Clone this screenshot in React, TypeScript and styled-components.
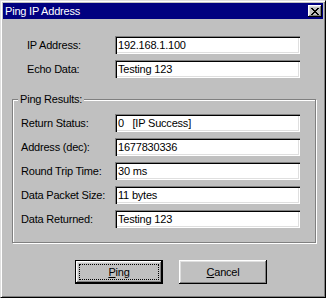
import { Fragment } from "react";
import styled, { createGlobalStyle } from "styled-components";

const GlobalStyle = createGlobalStyle`
	html, body {
		margin: 0;
		padding: 0;
		background: #c0c0c0;
	}
	body {
		font-family: "Liberation Sans", Arial, sans-serif;
		font-size: 11px;
		color: #000;
	}
`;

const Window = styled.div`
	box-sizing: border-box;
	width: 326px;
	height: 298px;
	background: #c0c0c0;
	border: 1px solid;
	border-color: #dfdfdf #000 #000 #dfdfdf;
	box-shadow: inset 1px 1px #fff, inset -1px -1px #808080;
	padding: 2px;
	display: flex;
	flex-direction: column;
`;

const TitleBar = styled.div`
	height: 16px;
	background: #000080;
	color: #fff;
	display: flex;
	align-items: center;
	justify-content: space-between;
	padding: 0 1px 0 2px;
`;

const TitleText = styled.span`
	font-size: 11px;
	line-height: 13px;
	letter-spacing: -0.2px;
`;

const CloseButton = styled.div`
	width: 14px;
	height: 12px;
	background: #c0c0c0;
	box-shadow: inset -1px -1px #000, inset 1px 1px #fff, inset -2px -2px #808080,
		inset 2px 2px #dfdfdf;
	display: flex;
	align-items: center;
	justify-content: center;
`;

const Fields = styled.div<{ $label: number }>`
	display: grid;
	grid-template-columns: ${(p) => p.$label}px 185px;
	row-gap: 6px;
	align-items: center;
`;

const TopSection = styled.div`
	margin-top: 17px;
	padding-left: 24px;
`;

const Label = styled.span`
	font-size: 11px;
	letter-spacing: -0.2px;
	line-height: 13px;
`;

const TextBox = styled.div`
	box-sizing: border-box;
	height: 18px;
	background: #fff;
	box-shadow: inset 1px 1px #808080, inset 2px 2px #000, inset -1px -1px #fff,
		inset -2px -2px #dfdfdf;
	padding: 0 2px 0 3px;
	display: flex;
	align-items: center;
	font-size: 11px;
	letter-spacing: -0.2px;
	white-space: pre;
`;

const Group = styled.div`
	position: relative;
	box-sizing: border-box;
	margin: 21px 0 0 9px;
	width: 304px;
	border: 1px solid #808080;
	box-shadow: inset 1px 1px #fff, 1px 1px #fff;
	padding: 14px 0 14px 8px;
`;

const Legend = styled.span`
	position: absolute;
	top: -7px;
	left: 5px;
	padding: 0 2px;
	background: #c0c0c0;
	font-size: 11px;
	line-height: 13px;
	letter-spacing: -0.2px;
`;

const ButtonRow = styled.div`
	display: flex;
	gap: 16px;
	margin-top: 17px;
	padding-left: 72px;
`;

const Button = styled.button<{ $default?: boolean }>`
	box-sizing: border-box;
	width: 88px;
	height: 24px;
	margin: 0;
	padding: ${(p) => (p.$default ? "2px" : "3px")};
	background: #c0c0c0;
	border: ${(p) => (p.$default ? "1px solid #000" : "none")};
	box-shadow: inset -1px -1px #000, inset 1px 1px #fff, inset -2px -2px #808080,
		inset 2px 2px #dfdfdf;
	font-family: "Liberation Sans", Arial, sans-serif;
	font-size: 11px;
	letter-spacing: -0.2px;
	color: #000;
	display: flex;
`;

const ButtonFace = styled.span<{ $focus?: boolean }>`
	flex: 1;
	display: flex;
	align-items: center;
	justify-content: center;
	margin: 1px;
	border: 1px dotted ${(p) => (p.$focus ? "#000" : "transparent")};
`;

const topRows = [
	["IP Address:", "192.168.1.100"],
	["Echo Data:", "Testing 123"],
];

const resultRows = [
	["Return Status:", "0   [IP Success]"],
	["Address (dec):", "1677830336"],
	["Round Trip Time:", "30 ms"],
	["Data Packet Size:", "11 bytes"],
	["Data Returned:", "Testing 123"],
];

function CloseGlyph() {
	return (
		<svg width="8" height="7" viewBox="0 0 8 7" shapeRendering="crispEdges">
			<path
				d="M0 0h2v1H0zM6 0h2v1H6zM1 1h2v1H1zM5 1h2v1H5zM2 2h4v1H2zM3 3h2v1H3zM2 4h4v1H2zM1 5h2v1H1zM5 5h2v1H5zM0 6h2v1H0zM6 6h2v1H6z"
				fill="#000"
			/>
		</svg>
	);
}

function FieldRows({ rows }: { rows: string[][] }) {
	return (
		<>
			{rows.map(([label, value]) => (
				<Fragment key={label}>
					<Label>{label}</Label>
					<TextBox>{value}</TextBox>
				</Fragment>
			))}
		</>
	);
}

export default function App() {
	return (
		<>
			<GlobalStyle />
			<Window>
				<TitleBar>
					<TitleText>Ping IP Address</TitleText>
					<CloseButton>
						<CloseGlyph />
					</CloseButton>
				</TitleBar>
				<TopSection>
					<Fields $label={88}>
						<FieldRows rows={topRows} />
					</Fields>
				</TopSection>
				<Group>
					<Legend>Ping Results:</Legend>
					<Fields $label={94}>
						<FieldRows rows={resultRows} />
					</Fields>
				</Group>
				<ButtonRow>
					<Button $default>
						<ButtonFace $focus>
							<span>
								<u>P</u>ing
							</span>
						</ButtonFace>
					</Button>
					<Button>
						<ButtonFace>
							<span>
								<u>C</u>ancel
							</span>
						</ButtonFace>
					</Button>
				</ButtonRow>
			</Window>
		</>
	);
}
